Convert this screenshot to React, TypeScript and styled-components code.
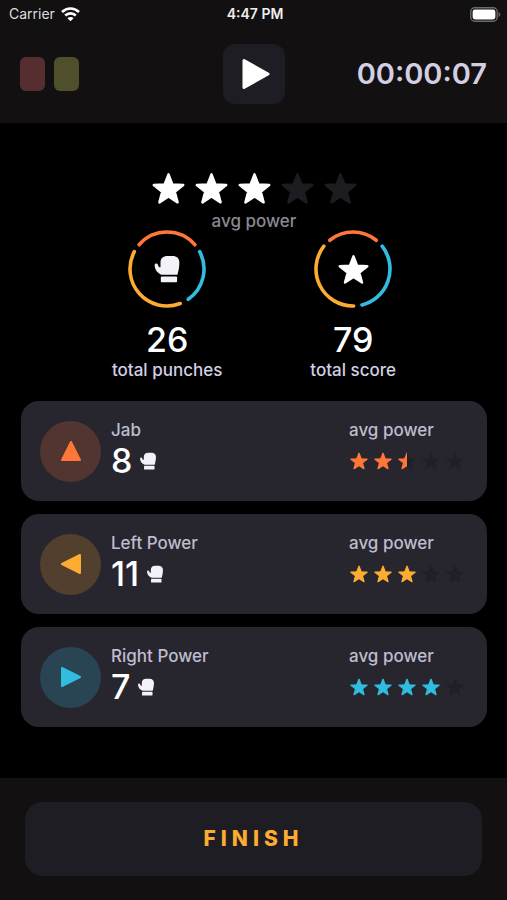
import React, { useId } from "react";
import styled, { createGlobalStyle } from "styled-components";

const GlobalStyle = createGlobalStyle`
  * { box-sizing: border-box; }
  body { margin: 0; background: #000; }
  button { border: 0; padding: 0; font: inherit; cursor: pointer; }
  h2, p, dl, dd, dt, ul { margin: 0; padding: 0; }
`;

const color = {
  orange: "#ff7639",
  yellow: "#fdac32",
  blue: "#31bce0",
  lilac: "#d2cfe4",
  label: "#bfbccf",
  panel: "#1e1d23",
  card: "#27262e",
  bar: "#121011",
};

const Screen = styled.div`
  min-height: 100vh;
  display: flex;
  flex-direction: column;
  background: #000;
  color: #fff;
  font-family: Inter, "Liberation Sans", sans-serif;
`;

const Header = styled.header`
  background: ${color.bar};
`;

const StatusBar = styled.div`
  display: grid;
  grid-template-columns: 1fr auto 1fr;
  align-items: center;
  height: 28px;
  padding: 0 6px 0 9px;
  font-size: 14px;
  line-height: 20px;
`;

const Carrier = styled.span`
  display: flex;
  align-items: center;
  gap: 6px;
  color: #dededf;
`;

const Clock = styled.time`
  font-weight: 600;
  color: #eeeeef;
`;

const BatterySlot = styled.span`
  display: flex;
  justify-content: flex-end;
`;

const Toolbar = styled.div`
  display: grid;
  grid-template-columns: 1fr auto 1fr;
  align-items: center;
  padding: 16px 20px 19px;
`;

const Tags = styled.div`
  display: flex;
  gap: 9px;
`;

const Tag = styled.button<{ $fill: string }>`
  width: 25px;
  height: 34px;
  border-radius: 6px;
  background: ${(p) => p.$fill};
`;

const PlayButton = styled.button`
  display: grid;
  place-items: center;
  width: 62px;
  height: 60px;
  border-radius: 12px;
  background: ${color.panel};
`;

const Timer = styled.time`
  justify-self: end;
  font-size: 29px;
  line-height: 32px;
  font-weight: 600;
  color: ${color.lilac};
`;

const Main = styled.main`
  flex: 1;
  display: flex;
  flex-direction: column;
  padding: 49px 20px 51px 21px;
`;

const Overall = styled.section`
  display: flex;
  flex-direction: column;
  align-items: center;
`;

const StarRow = styled.span<{ $gap: number }>`
  display: flex;
  gap: ${(p) => p.$gap}px;
`;

const Caption = styled.p<{ $tone: string }>`
  font-size: 17px;
  line-height: 20px;
  font-weight: 500;
  color: ${(p) => p.$tone};
`;

const OverallLabel = styled(Caption)`
  margin-top: 6px;
`;

const Totals = styled.section`
  display: flex;
  justify-content: center;
  gap: 88px;
`;

const Total = styled.div`
  display: flex;
  flex-direction: column;
  align-items: center;
`;

const RingFrame = styled.div`
  display: grid;
  place-items: center;
  align-content: center;
  height: 76px;

  > * {
    grid-area: 1 / 1;
  }
`;

const Figure = styled.p`
  font-size: 34px;
  line-height: 38px;
  font-weight: 500;
`;

const TotalFigure = styled(Figure)`
  margin: 14px 0 1px;
`;

const CardList = styled.ul`
  display: flex;
  flex-direction: column;
  gap: 13px;
  margin-top: 21px;
  list-style: none;
`;

const Card = styled.li`
  display: flex;
  align-items: center;
  gap: 10px;
  height: 100px;
  padding: 0 23px 0 19px;
  border-radius: 18px;
  background: ${color.card};
`;

const Badge = styled.span<{ $fill: string }>`
  display: grid;
  place-items: center;
  width: 61px;
  height: 61px;
  border-radius: 50%;
  background: ${(p) => p.$fill};
`;

const CardBody = styled.div`
  flex: 1;
  align-self: stretch;
  padding-top: 19px;
`;

const CountRow = styled.div`
  display: flex;
  align-items: center;
  gap: 7px;
  margin-top: 2px;
`;

const CardPower = styled.div`
  align-self: stretch;
  padding-top: 19px;
`;

const CardStars = styled.div`
  margin-top: 12px;
  padding-left: 1px;
`;

const Footer = styled.footer`
  padding: 24px 25px;
  background: ${color.bar};
`;

const FinishButton = styled.button`
  width: 100%;
  height: 74px;
  border-radius: 18px;
  background: ${color.panel};
  color: ${color.yellow};

  && {
    font-size: 21px;
    line-height: 24px;
    font-weight: 800;
    letter-spacing: 5px;
  }
`;

const starPoints = Array.from({ length: 10 }, (_, i) => {
  const radius = i % 2 ? 6.4 : 15;
  const angle = (Math.PI * i) / 5;
  return `${(16 + radius * Math.sin(angle)).toFixed(2)},${(17.3 - radius * Math.cos(angle)).toFixed(2)}`;
}).join(" ");

function Star({ size, fill, empty, amount = 1 }: { size: number; fill: string; empty: string; amount?: number }) {
  const clip = useId();
  const shape = { points: starPoints, strokeWidth: 2.4, strokeLinejoin: "round" as const };
  return (
    <svg width={size} height={size} viewBox="0 0 32 32" aria-hidden="true">
      {amount < 1 && <polygon {...shape} fill={empty} stroke={empty} />}
      {amount > 0 && (
        <>
          <clipPath id={clip}>
            <rect width={32 * amount} height="32" />
          </clipPath>
          <polygon {...shape} fill={fill} stroke={fill} clipPath={`url(#${clip})`} />
        </>
      )}
    </svg>
  );
}

interface RatingProps {
  value: number;
  size: number;
  gap: number;
  fill: string;
  empty: string;
}

function Rating({ value, size, gap, fill, empty }: RatingProps) {
  return (
    <StarRow $gap={gap} role="img" aria-label={`${value} of 5`}>
      {[0, 1, 2, 3, 4].map((i) => (
        <Star key={i} size={size} fill={fill} empty={empty} amount={Math.max(0, Math.min(1, value - i))} />
      ))}
    </StarRow>
  );
}

function Glove({ size }: { size: number }) {
  return (
    <svg width={size} height={size} viewBox="0 0 84 86" fill="#f3f2f9" aria-hidden="true">
      <path d="M22 23C22 10 30 3 44 3H58C73 3 80 11 80 23C80 38 77 50 74 61H26C13 56 5 45 4 32C4 25 12 24 14 30C15 35 18 38 22 38Z" />
      <rect x="23" y="66" width="50" height="18" rx="3" />
    </svg>
  );
}

function arc(from: number, to: number) {
  const at = (deg: number) => {
    const a = (deg * Math.PI) / 180;
    return `${(39 + 37 * Math.sin(a)).toFixed(2)} ${(39 - 37 * Math.cos(a)).toFixed(2)}`;
  };
  return `M${at(from)}A37 37 0 0 1 ${at(to)}`;
}

function Ring({ arcs }: { arcs: [string, number, number][] }) {
  return (
    <svg width="78" height="78" viewBox="0 0 78 78" fill="none" strokeWidth="3.6" strokeLinecap="round" aria-hidden="true">
      {arcs.map(([stroke, from, to]) => (
        <path key={stroke} d={arc(from, to)} stroke={stroke} />
      ))}
    </svg>
  );
}

const triangles = {
  up: "M11 2L20 20H2Z",
  left: "M2 11L20 2V20Z",
  right: "M20 11L2 2V20Z",
};

function Triangle({ dir, fill }: { dir: keyof typeof triangles; fill: string }) {
  return (
    <svg width="22" height="22" viewBox="0 0 22 22" aria-hidden="true">
      <path d={triangles[dir]} fill={fill} stroke={fill} strokeWidth="2" strokeLinejoin="round" />
    </svg>
  );
}

function WifiIcon() {
  return (
    <svg width="19" height="15" viewBox="0 0 19 15" fill="none" stroke="#fff" strokeWidth="2.7" aria-hidden="true">
      <path d="M1 5C6 0.3 13 0.3 18 5" />
      <path d="M4.2 8.5C7.2 5.6 11.8 5.6 14.8 8.5" />
      <path d="M9.5 14.2L6.4 11.2C8.2 9.6 10.8 9.6 12.6 11.2Z" fill="#fff" stroke="none" />
    </svg>
  );
}

function BatteryIcon() {
  return (
    <svg width="31" height="15" viewBox="0 0 31 15" aria-hidden="true">
      <rect x="0.8" y="0.8" width="26.4" height="13.4" rx="4" fill="none" stroke="#6b6a6c" strokeWidth="1.4" />
      <rect x="2.6" y="2.6" width="22.8" height="9.8" rx="2.4" fill="#fff" />
      <path d="M28.6 5C30.8 6 30.8 9 28.6 10Z" fill="#6b6a6c" />
    </svg>
  );
}

const punches = [
  { name: "Jab", count: 8, power: 2.5, dir: "up", fill: color.orange, badge: "#523430" },
  { name: "Left Power", count: 11, power: 3, dir: "left", fill: color.yellow, badge: "#523f2e" },
  { name: "Right Power", count: 7, power: 4, dir: "right", fill: color.blue, badge: "#294452" },
] as const;

export default function App() {
  return (
    <Screen>
      <GlobalStyle />
      <Header>
        <StatusBar>
          <Carrier>
            Carrier <WifiIcon />
          </Carrier>
          <Clock>4:47 PM</Clock>
          <BatterySlot>
            <BatteryIcon />
          </BatterySlot>
        </StatusBar>
        <Toolbar>
          <Tags>
            <Tag type="button" $fill="#562e30" aria-label="Red" />
            <Tag type="button" $fill="#504f2c" aria-label="Yellow" />
          </Tags>
          <PlayButton type="button" aria-label="Play">
            <svg width="34" height="34" viewBox="0 0 34 34" aria-hidden="true">
              <path d="M7 3.5L31 17L7 30.5Z" fill="#fff" stroke="#fff" strokeWidth="3" strokeLinejoin="round" />
            </svg>
          </PlayButton>
          <Timer>00:00:07</Timer>
        </Toolbar>
      </Header>

      <Main>
        <Overall>
          <Rating value={3} size={33} gap={10} fill="#fff" empty="#1d1c21" />
          <OverallLabel $tone="#8b8994">avg power</OverallLabel>
        </Overall>
        <Totals>
          <Total>
            <RingFrame>
              <Ring
                arcs={[
                  [color.orange, -49, 49],
                  [color.blue, 62, 145],
                  [color.yellow, 159, 298],
                ]}
              />
              <Glove size={28} />
            </RingFrame>
            <TotalFigure>26</TotalFigure>
            <Caption $tone={color.lilac}>total punches</Caption>
          </Total>
          <Total>
            <RingFrame>
              <Ring
                arcs={[
                  [color.orange, -39, 39],
                  [color.blue, 52, 166],
                  [color.yellow, 179, 308],
                ]}
              />
              <Star size={31} fill="#fff" empty="#1d1c21" />
            </RingFrame>
            <TotalFigure>79</TotalFigure>
            <Caption $tone={color.lilac}>total score</Caption>
          </Total>
        </Totals>

        <CardList>
          {punches.map((p) => (
            <Card key={p.name}>
              <Badge $fill={p.badge}>
                <Triangle dir={p.dir} fill={p.fill} />
              </Badge>
              <CardBody>
                <Caption as="h2" $tone={color.label}>
                  {p.name}
                </Caption>
                <CountRow>
                  <Figure>{p.count}</Figure>
                  <Glove size={18} />
                </CountRow>
              </CardBody>
              <CardPower>
                <Caption $tone={color.label}>avg power</Caption>
                <CardStars>
                  <Rating value={p.power} size={18} gap={6} fill={p.fill} empty="#212027" />
                </CardStars>
              </CardPower>
            </Card>
          ))}
        </CardList>
      </Main>

      <Footer>
        <FinishButton type="button">FINISH</FinishButton>
      </Footer>
    </Screen>
  );
}
